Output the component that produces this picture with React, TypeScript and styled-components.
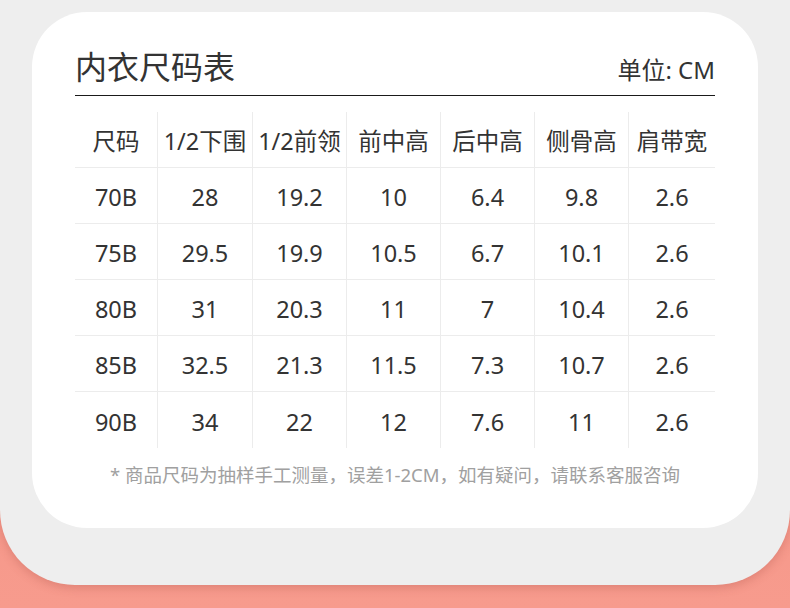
import React from "react";
import styled, { createGlobalStyle } from "styled-components";

const Global = createGlobalStyle`
  html, body { margin: 0; padding: 0; }
  body {
    background: #f69a8c;
    font-family: "Noto Sans", "Noto Sans CJK SC", sans-serif;
  }
`;

const Page = styled.div`
  width: 790px;
  height: 608px;
  background: linear-gradient(180deg, #ef8d80 0%, #f79b8d 100%);
  overflow: hidden;
`;

const Panel = styled.div`
  height: 585px;
  box-sizing: border-box;
  background: #eeeeee;
  border-radius: 0 0 75px 75px;
  padding: 12px 32px 0;
  box-shadow: 0 3px 10px rgba(150, 60, 50, 0.25);
`;

const Card = styled.div`
  height: 516px;
  box-sizing: border-box;
  background: #ffffff;
  border-radius: 55px;
  padding: 33px 43px 0;
`;

const Header = styled.div`
  display: flex;
  justify-content: space-between;
  align-items: baseline;
  padding-bottom: 10px;
  border-bottom: 1.5px solid #1a1a1a;
`;

const Title = styled.div`
  font-family: "Noto Sans CJK SC", sans-serif;
  font-size: 32px;
  line-height: 40px;
  color: #333333;
`;

const Unit = styled.div`
  font-size: 24px;
  line-height: 30px;
  color: #333333;
`;

const Table = styled.div`
  margin-top: 16px;
  display: grid;
  grid-template-columns: 83px 95px 94px 94px 94px 94px 86px;
  grid-auto-rows: 56px;
`;

const Cell = styled.div<{ $last?: boolean; $bottom?: boolean; $head?: boolean }>`
  display: flex;
  align-items: center;
  justify-content: center;
  font-size: 23.5px;
  color: #333333;
  white-space: nowrap;
  box-sizing: border-box;
  padding-top: ${(p) => (p.$head ? "0" : "3px")};
  border-right: ${(p) => (p.$last ? "none" : "1px solid #ececec")};
  border-bottom: ${(p) => (p.$bottom ? "none" : "1px solid #ececec")};
`;

const Note = styled.div`
  margin-top: 15px;
  text-align: center;
  font-size: 18.5px;
  line-height: 24px;
  color: #a0a0a0;
`;

const headers = ["尺码", "1/2下围", "1/2前领", "前中高", "后中高", "侧骨高", "肩带宽"];
const rows = [
  ["70B", "28", "19.2", "10", "6.4", "9.8", "2.6"],
  ["75B", "29.5", "19.9", "10.5", "6.7", "10.1", "2.6"],
  ["80B", "31", "20.3", "11", "7", "10.4", "2.6"],
  ["85B", "32.5", "21.3", "11.5", "7.3", "10.7", "2.6"],
  ["90B", "34", "22", "12", "7.6", "11", "2.6"],
];

export default function App() {
  const all = [headers, ...rows];
  return (
    <Page>
      <Global />
      <Panel>
        <Card>
          <Header>
            <Title>内衣尺码表</Title>
            <Unit>单位: CM</Unit>
          </Header>
          <Table>
            {all.map((r, ri) =>
              r.map((c, ci) => (
                <Cell
                  key={`${ri}-${ci}`}
                  $head={ri === 0}
                  $last={ci === r.length - 1}
                  $bottom={ri === all.length - 1}
                >
                  {c}
                </Cell>
              ))
            )}
          </Table>
          <Note>* 商品尺码为抽样手工测量，误差1-2CM，如有疑问，请联系客服咨询</Note>
        </Card>
      </Panel>
    </Page>
  );
}
